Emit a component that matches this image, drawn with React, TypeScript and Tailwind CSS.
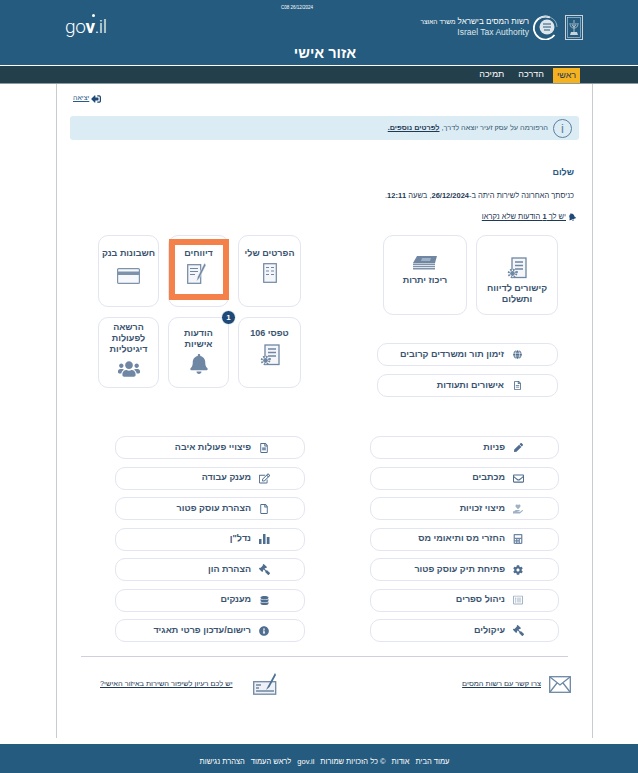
import {
  FaPen,
  FaRegEnvelope,
  FaHandHoldingHeart,
  FaCalculator,
  FaCog,
  FaGavel,
  FaRegFileAlt,
  FaRegEdit,
  FaDatabase,
  FaInfoCircle,
  FaGlobe,
  FaBell,
  FaUsers,
  FaSignOutAlt,
  FaRegFile,
  FaRegListAlt,
} from "react-icons/fa";

const FormIcon = () => (
  <svg width="20" height="22" viewBox="0 0 20 22" fill="none" stroke="#6f87a3" strokeWidth="1.3">
    <rect x="5" y="1" width="14" height="19.500" fill="#f4f6fa" />
    <path d="M8 5h8M8 8.500h8M8 12h8M8 15h3" />
    <circle cx="5.500" cy="16.500" r="3.800" fill="#ffffff" stroke="#6f87a3" strokeWidth="2" strokeDasharray="1.600 1.400" />
    <circle cx="5.500" cy="16.500" r="2.400" fill="#6f87a3" stroke="none" />
  </svg>
);

const DetailsIcon = () => (
  <svg width="14" height="20" viewBox="0 0 14 20" fill="none" stroke="#6f87a3" strokeWidth="1.200">
    <rect x="0.700" y="0.700" width="12.600" height="18.600" fill="#f4f6fa" />
    <path d="M3 4.500h3M8 4.500h3M3 8h3M8 8h3M3 11.500h3M8 11.500h3" />
  </svg>
);

const ReportIcon = () => (
  <svg width="19" height="21" viewBox="0 0 19 21" fill="none" stroke="#6f87a3" strokeWidth="1.200">
    <rect x="0.700" y="1.700" width="13" height="18.600" fill="#f4f6fa" />
    <path d="M3 5.500h8M3 8.500h8M3 11.500h5" />
    <path d="M17.500 0 10.500 14l-1 4.500 3-3.500L19 2z" fill="#6f87a3" stroke="#ffffff" strokeWidth="0.500" />
  </svg>
);

const CardIcon = () => (
  <svg width="23" height="16" viewBox="0 0 23 16" fill="none" stroke="#7d93ac" strokeWidth="1.200">
    <rect x="0.600" y="0.600" width="21.800" height="14.800" rx="1" fill="#f7f8fb" />
    <rect x="1" y="3.500" width="21" height="3.500" fill="#7d93ac" stroke="none" />
  </svg>
);

const MoneyIcon = () => (
  <svg width="24" height="14" viewBox="0 0 24 14">
    <path d="M4 0h20l-2 7H0z" fill="#6f87a3" />
    <path d="M9 2h9l-1 3H8z" fill="#9fb1c4" />
    <path d="M0 7.500h22v1.500H0zM0 9.800h22v1.500H0zM0 12h22v1.500H0z" fill="#7d93ac" />
  </svg>
);

const BarsIcon = () => (
  <svg width="11" height="10" viewBox="0 0 11 10" fill="currentColor">
    <path d="M0 5h2.500v5H0zM4 0h2.500v10H4zM7.800 3h2.700v7H7.800z" />
  </svg>
);

const Emblem = () => (
  <svg width="18" height="25" viewBox="0 0 18 25" fill="none" stroke="#c9d3da" strokeWidth="1">
    <rect x="0.500" y="0.500" width="17" height="24" />
    <rect x="2.500" y="2.500" width="13" height="20" strokeWidth="0.600" />
    <path d="M9 5v12M5 8c0 4 2 5 4 5s4-1 4-5M7 8c0 3 1 3.500 2 3.500s2-.5 2-3.500" strokeWidth="0.800" />
    <path d="M6 17h6l1 3H5z" fill="#c9d3da" stroke="none" />
  </svg>
);

const AuthorityLogo = () => (
  <svg width="26" height="26" viewBox="0 0 26 26" fill="none">
    <path d="M17 3.500A11.500 11.500 0 1 0 21.500 21" stroke="#ffffff" strokeWidth="1.800" />
    <path d="M6 5 A11 11 0 0 1 24 13" stroke="#aebfcb" strokeWidth="0.800" />
    <circle cx="14" cy="13" r="7.500" fill="#dfe6eb" />
    <path d="M10 10h8M10 13h8M11 16h6" stroke="#255b7e" strokeWidth="1.200" />
  </svg>
);

const EnvelopeIcon = () => (
  <svg width="22" height="17" viewBox="0 0 22 17" fill="#ffffff" stroke="#6f87a3" strokeWidth="1.300">
    <rect x="0.700" y="0.700" width="20.600" height="15.600" />
    <path d="m1 1 10 8 10-8M1 16l7-9M21 16l-7-9" fill="none" />
  </svg>
);

const CheckIcon = () => (
  <svg width="24" height="22" viewBox="0 0 24 22" fill="none" stroke="#6f87a3" strokeWidth="1.300">
    <rect x="0.700" y="8.700" width="22" height="12.500" fill="#eef1f6" />
    <path d="M3 12h5M3 15h3M3 18h18" />
    <path d="M22 0 15 13l-2 4 3.500-3L23 2z" fill="#4c6f94" stroke="none" />
  </svg>
);

const rightLinks = [
  { label: "פניות", icon: <FaPen size={9} /> },
  { label: "מכתבים", icon: <FaRegEnvelope size={11} /> },
  { label: "מיצוי זכויות", icon: <FaHandHoldingHeart size={10} className="text-[#9fb1c4]" /> },
  { label: "החזרי מס ותיאומי מס", icon: <FaCalculator size={10} className="text-[#6f87a3]" /> },
  { label: "פתיחת תיק עוסק פטור", icon: <FaCog size={10} /> },
  { label: "ניהול ספרים", icon: <FaRegListAlt size={10} className="text-[#9fb1c4]" /> },
  { label: "עיקולים", icon: <FaGavel size={11} className="-scale-x-100" /> },
];

const leftLinks = [
  { label: "פיצויי פעולות איבה", icon: <FaRegFileAlt size={10} /> },
  { label: "מענק עבודה", icon: <FaRegEdit size={11} /> },
  { label: "הצהרת עוסק פטור", icon: <FaRegFile size={10} /> },
  { label: "נדל\"ן", icon: <BarsIcon /> },
  { label: "הצהרת הון", icon: <FaGavel size={11} className="-scale-x-100" /> },
  { label: "מענקים", icon: <FaDatabase size={9} /> },
  { label: "רישום/עדכון פרטי תאגיד", icon: <FaInfoCircle size={10} /> },
];

const PillLink = ({ label, icon, className }: { label: string; icon: React.ReactNode; className?: string }) => (
  <a className={`flex items-center gap-[7px] h-[23px] pr-[34px] rounded-[10px] border-[1.5px] border-[#e3e5f1] bg-white text-[9px] font-bold text-[#3a5470] ${className ?? ""}`}>
    <span className="flex justify-center text-[#4f6d8f] w-3">{icon}</span>
    <span>{label}</span>
  </a>
);

const Tile = ({ children, className }: { children: React.ReactNode; className: string }) => (
  <div className={`relative flex flex-col items-center rounded-[10px] border-[1.5px] border-[#e3e5f1] bg-white text-center text-[9px] leading-[11px] font-bold text-[#3a5470] ${className}`}>
    {children}
  </div>
);

export default function App() {
  return (
    <div dir="rtl" className="min-h-[773px] flex flex-col bg-white font-['Liberation_Sans',Arial,sans-serif] text-[#1f3a55]">
      <header className="h-[66px] bg-[#255b7e] border-b border-white text-white relative">
        <div className="absolute top-[5px] left-[281px] text-[4.500px] leading-[6px]" dir="ltr">C08 26/12/2024</div>
        <div className="flex items-start justify-between pt-[14px] pr-[55px] pl-[65px]">
          <div className="flex items-center gap-[6px]">
            <Emblem />
            <AuthorityLogo />
            <div className="text-right text-[8px] leading-[11px] -mr-[2px]">
              <div>
                רשות המסים בישראל <span className="text-[6.500px]">משרד האוצר</span>
              </div>
              <div dir="ltr" className="text-[8.500px] font-light text-[#dfe6eb]">Israel Tax Authority</div>
            </div>
          </div>
          <div dir="ltr" className="text-[19px] leading-[26px] tracking-[-0.4px] font-['Roboto',sans-serif] font-light">
            go
            <b className="relative font-bold">
              v
              <span className="absolute -top-[1px] right-0 w-[3px] h-[3px] rounded-full bg-white" />
            </b>
            .il
          </div>
        </div>
        <h1 className="absolute inset-x-0 top-[43px] pl-[12px] text-center text-[14.500px] leading-[20px] font-bold">אזור אישי</h1>
      </header>

      <nav className="h-[18px] bg-[#243f4c] border-b border-[#8a9aa3] flex items-stretch pr-[58px] text-[9px] text-white">
        <span className="bg-[#f4b120] text-[#1f3a55] w-[27px] flex items-center justify-center mt-[2px]">ראשי</span>
        <span className="flex items-center mr-[9px]">הדרכה</span>
        <span className="flex items-center mr-[14px]">תמיכה</span>
      </nav>

      <main className="ml-[56px] mr-[45px] mb-[6px] flex-1 border-x border-[#c9cbd0] pt-[8px]">
        <div className="h-[13px] flex justify-end pl-[16px]">
          <a className="flex items-center gap-[2px] text-[7px] underline text-[#2a5a86]">
            <FaSignOutAlt size={10} className="text-[#1f4a78] rotate-180" />
            <span>יציאה</span>
          </a>
        </div>

        <div className="mt-[11px] mx-[13px] h-[24px] rounded-[3px] bg-[#dcecf4] flex items-center pr-[7px] gap-[5px] text-[7.300px] text-[#33566f]">
          <span className="w-[19px] h-[19px] rounded-full border border-[#5b7f9c] flex items-center justify-center text-[13px] leading-none text-[#5b7f9c]">i</span>
          <span>
            הרפורמה על עסק זעיר יוצאה לדרך, <a className="font-bold underline text-[#1f3a55]">לפרטים נוספים.</a>
          </span>
        </div>

        <div className="pr-[18px] mt-[26px]">
          <h2 className="text-[9px] leading-[12px] font-bold text-[#2a5a86]">שלום</h2>
          <p className="mt-[13px] text-[7.500px] leading-[10px] text-[#1f3a55]">
            כניסתך האחרונה לשירות היתה ב-<b>26/12/2024</b>, בשעה <b>12:11</b>.
          </p>
          <a className="mt-[11px] -mr-[2px] flex items-center gap-[2px] text-[7.500px] leading-[10px] underline text-[#1f3a55]">
            <FaBell size={8} className="text-[#1f4a78] -rotate-[20deg]" />
            <span>יש לך <b>1</b> הודעות שלא נקראו</span>
          </a>
        </div>

        <div className="mt-[13px] pr-[34px] flex items-start">
          <div className="w-[181px]">
            <div className="flex gap-[9px]">
              <Tile className="w-[82px] h-[80px] pt-[21px]">
                <FormIcon />
                <span className="mt-[4px]">קישורים לדיווח<br />ותשלום</span>
              </Tile>
              <Tile className="w-[84px] h-[80px] pt-[20px]">
                <MoneyIcon />
                <span className="mt-[5px]">ריכוז יתרות</span>
              </Tile>
            </div>
            <PillLink className="mt-[28px]" label="זימון תור ומשרדים קרובים" icon={<FaGlobe size={9} />} />
            <PillLink className="mt-[8px]" label="אישורים ותעודות" icon={<FaRegFileAlt size={9} />} />
          </div>

          <div className="mr-[76px] grid grid-cols-[63px_61px_61px] gap-x-[9px] gap-y-[10px]">
            <Tile className="h-[72px] pt-[12px]">
              <span>הפרטים שלי</span>
              <span className="mt-[4px]"><DetailsIcon /></span>
            </Tile>
            <Tile className="h-[72px] pt-[12px]">
              <span>דיווחים</span>
              <span className="mt-[4px] mr-[4px]"><ReportIcon /></span>
              <span className="absolute top-[3px] left-0 w-[60px] h-[61px] border-[6px] border-[#f4804a]" />
            </Tile>
            <Tile className="h-[72px] pt-[12px]">
              <span>חשבונות בנק</span>
              <span className="mt-[9px]"><CardIcon /></span>
            </Tile>
            <Tile className="h-[71px] pt-[10px]">
              <span>טפסי 106</span>
              <span className="mt-[5px]"><FormIcon /></span>
            </Tile>
            <Tile className="h-[71px] pt-[10px]">
              <span className="absolute -top-[8px] -right-[8px] w-[15px] h-[15px] rounded-full bg-[#1f4a78] border border-white text-white text-[8px] leading-[13px]">1</span>
              <span>הודעות<br />אישיות</span>
              <FaBell size={20} className="mt-[4px] text-[#6f87a3]" />
            </Tile>
            <Tile className="h-[71px] pt-[4px]">
              <span>הרשאה<br />לפעולות<br />דיגיטליות</span>
              <FaUsers size={22} className="mt-[3px] text-[#6f87a3]" />
            </Tile>
          </div>
        </div>

        <div className="mt-[39px] pr-[33px] pl-[58px] grid grid-cols-[189px_190px] justify-between">
          <div className="flex flex-col gap-[7.500px]">
            {rightLinks.map((l) => (
              <PillLink key={l.label} label={l.label} icon={l.icon} />
            ))}
          </div>
          <div className="flex flex-col gap-[7.500px]">
            {leftLinks.map((l) => (
              <PillLink key={l.label} label={l.label} icon={l.icon} />
            ))}
          </div>
        </div>

        <div className="mt-[14px] ml-[24px] mr-[24px] border-t border-[#cfcfe0] pt-[16px] flex items-center justify-between text-[7.400px] text-[#1f3a55]">
          <a className="flex items-center gap-[8px] -mr-[3px]">
            <EnvelopeIcon />
            <span className="underline">צרו קשר עם רשות המסים</span>
          </a>
          <a className="flex items-center gap-[20px] ml-[19px]">
            <CheckIcon />
            <span className="underline">יש לכם רעיון לשיפור השירות באיזור האישי?</span>
          </a>
        </div>
      </main>

      <footer className="h-[29px] bg-[#255b7e] flex items-center justify-center gap-[6px] pt-[6px] pl-[11px] text-[7.500px] text-white">
        <span>עמוד הבית</span>
        <span>אודות</span>
        <span>© כל הזכויות שמורות</span>
        <span dir="ltr">gov.il</span>
        <span>לראש העמוד</span>
        <span>הצהרת נגישות</span>
      </footer>
    </div>
  );
}
